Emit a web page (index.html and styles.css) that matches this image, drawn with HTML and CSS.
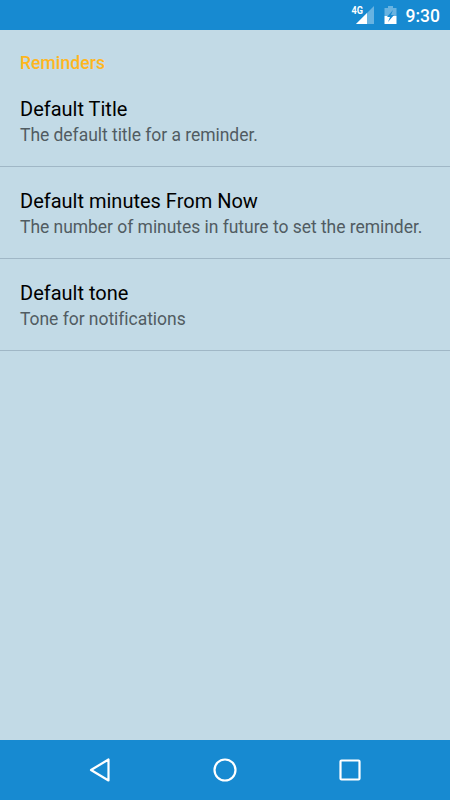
FILE: index.html
```html
<!DOCTYPE html>
<html lang="en">
<head>
  <meta charset="utf-8">
  <meta name="viewport" content="width=device-width, initial-scale=1">
  <title>Settings</title>
  <link rel="stylesheet" href="styles.css">
</head>
<body>
  <header class="status-bar">
    <svg class="signal" width="24" height="20" viewBox="0 0 24 20">
      <path d="M23 1v18H5z" fill="#fff" opacity="0.35"/>
      <path d="M16 8v11H5z" fill="#fff"/>
      <text class="network" x="0.500" y="9" textLength="11.500" lengthAdjust="spacingAndGlyphs">4G</text>
    </svg>
    <svg class="battery" width="13" height="18" viewBox="0 0 13 18">
      <path d="M4 0h5v2h3.500v8H0.500V2H4z" fill="#fff" opacity="0.35"/>
      <path d="M0.500 10h12v8h-12z" fill="#fff"/>
      <path d="M9 4L3 11h3l-2 5 6-7H7z" fill="#178ad1"/>
    </svg>
    <span class="clock">9:30</span>
  </header>

  <main class="preferences">
    <h2 class="category">Reminders</h2>
    <div class="preference">
      <div class="title">Default Title</div>
      <div class="summary">The default title for a reminder.</div>
    </div>
    <div class="preference">
      <div class="title">Default minutes From Now</div>
      <div class="summary">The number of minutes in future to set the reminder.</div>
    </div>
    <div class="preference">
      <div class="title">Default tone</div>
      <div class="summary">Tone for notifications</div>
    </div>
  </main>

  <nav class="nav-bar">
    <svg width="30" height="30" viewBox="0 0 30 30"><path d="M23.500 4.500v21L6 15z"/></svg>
    <svg width="30" height="30" viewBox="0 0 30 30"><circle cx="15" cy="15" r="10.500"/></svg>
    <svg width="30" height="30" viewBox="0 0 30 30"><rect x="5.500" y="5.500" width="19" height="19" rx="1"/></svg>
  </nav>
</body>
</html>
```
FILE: styles.css
```css
* {
  margin: 0;
  padding: 0;
  box-sizing: border-box;
}

body {
  display: flex;
  flex-direction: column;
  height: 100vh;
  font-family: Roboto, sans-serif;
  background: #c2dae6;
}

.status-bar {
  display: flex;
  align-items: center;
  justify-content: flex-end;
  height: 30px;
  padding-right: 10px;
  background: #178ad1;
  color: #fff;
}

.network {
  font-size: 10.5px;
  font-weight: 700;
  fill: #fff;
}

.battery {
  margin-left: 9px;
}

.clock {
  margin-left: 9px;
  padding-top: 2px;
  font-size: 17.5px;
  font-weight: 500;
}

.preferences {
  flex: 1;
}

.category {
  height: 45px;
  padding: 21px 20px 0;
  font-size: 17.5px;
  font-weight: 500;
  line-height: 25px;
  letter-spacing: 0.08px;
  color: #ffb61e;
}

.preference {
  height: 92px;
  padding: 21px 20px 0;
  border-bottom: 1px solid #a0b7c6;
}

.title {
  font-size: 20px;
  line-height: 27px;
  color: #000;
}

.summary {
  font-size: 17.5px;
  line-height: 24px;
  letter-spacing: -0.04px;
  color: #515c62;
  white-space: nowrap;
}

.nav-bar {
  display: flex;
  align-items: center;
  justify-content: center;
  gap: 95px;
  height: 60px;
  background: #178ad1;
}

.nav-bar svg {
  fill: none;
  stroke: #fff;
  stroke-width: 2.2;
  stroke-linejoin: round;
}
```
